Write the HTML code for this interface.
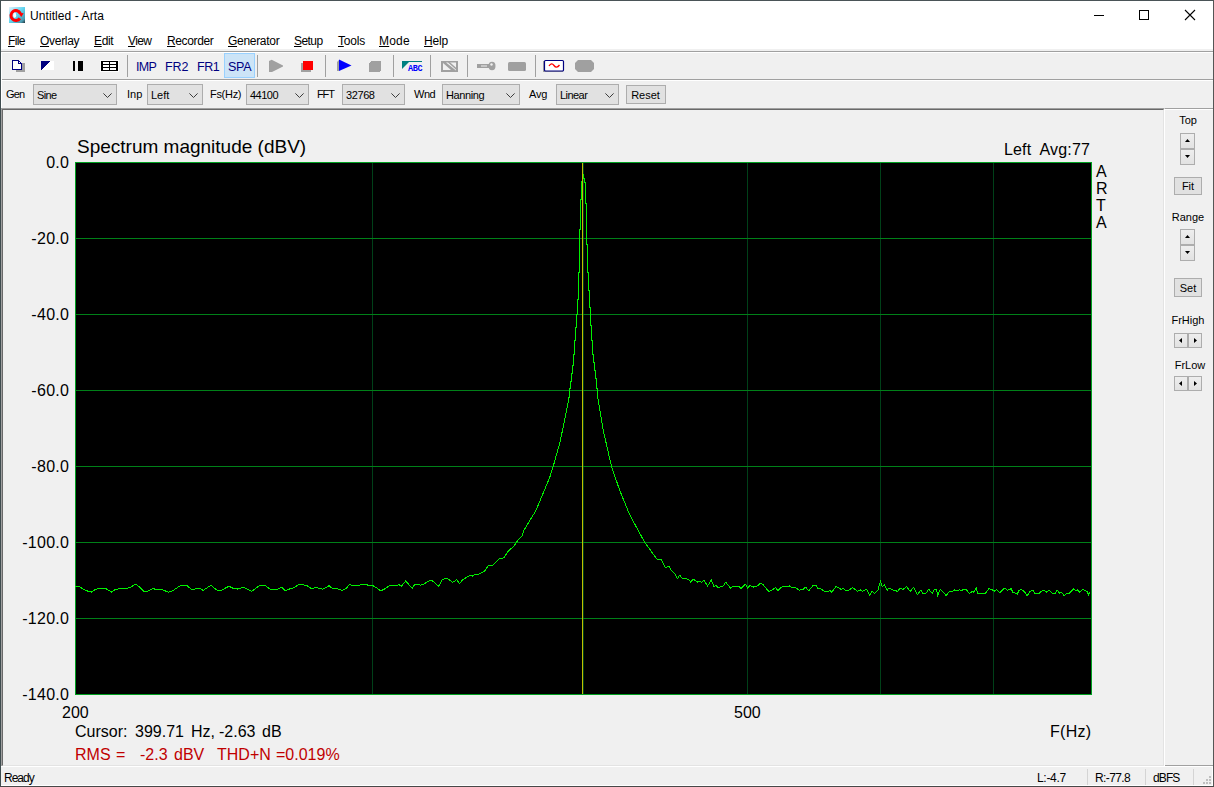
<!DOCTYPE html>
<html><head><meta charset="utf-8"><title>Untitled - Arta</title>
<style>
*{box-sizing:border-box;margin:0;padding:0}
html,body{width:1214px;height:787px;overflow:hidden;background:#f0f0f0;font-family:"Liberation Sans",sans-serif;color:#000}
#win{position:absolute;left:0;top:0;width:1214px;height:787px;background:#f0f0f0;border:1px solid;border-color:#4a5457 #555555 #484848 #3f4c4f;overflow:hidden}
.abs{position:absolute}
.t{position:absolute;white-space:pre;line-height:1}
#title{left:0;top:0;width:1212px;height:30px;background:#fff}
#menu{left:0;top:30px;width:1212px;height:18px;background:#fff}
.ui{font-size:12px}
.m{position:absolute;top:3px;font-size:12px;white-space:pre;line-height:14px}
.m u{text-decoration:underline;text-underline-offset:1px}
.hl{position:absolute;left:0;width:1212px;height:1px}
.sep{position:absolute;top:54px;width:1px;height:22px;background:#a0a0a0}
.lbl{position:absolute;font-size:11px;white-space:pre;line-height:12px;top:87px}
.combo{position:absolute;top:83px;height:21px;background:#e1e1e1;border:1px solid #adadad;font-size:11px;line-height:12px;padding:4px 0 0 3px;white-space:pre}
.combo svg{position:absolute;right:4px;top:8px}
.btn{position:absolute;background:#e1e1e1;border:1px solid #adadad;font-size:11px;line-height:12px;text-align:center;white-space:pre}
.nv{color:#000080}
.tb{position:absolute;top:59px;font-size:12.500px;letter-spacing:-0.1px;line-height:14px;color:#000080;white-space:pre}
.pl{position:absolute;white-space:pre;font-size:16px;line-height:16px}
.w{position:absolute;top:0}
.rp{position:absolute;font-size:11px;line-height:12px;white-space:pre;text-align:center}
.spin{position:absolute;background:linear-gradient(#eeeeee,#e2e2e2);border:1px solid #adadad}
</style></head><body>
<div id="win">
<!-- title bar -->
<div id="title" class="abs">
 <svg class="abs" style="left:8px;top:6px" width="16" height="16" viewBox="0 0 16 16">
  <defs><linearGradient id="ig" x1="0" y1="0" x2="1" y2="1"><stop offset="0" stop-color="#e4f2fb"/><stop offset="0.5" stop-color="#5fd4f0"/><stop offset="0.85" stop-color="#4a9ab0"/><stop offset="1" stop-color="#203038"/></linearGradient></defs>
  <rect width="16" height="16" fill="url(#ig)"/>
  <path d="M11.300 6.400 A4.900 4.900 0 1 0 10.900 11.300" fill="none" stroke="#ff0000" stroke-width="3"/>
  <path d="M9.200 5.800 L14.700 6.300 L12.300 9.900 Z" fill="#ff0000"/>
  <ellipse cx="5.700" cy="8.300" rx="1.500" ry="2.700" fill="#ffffff"/>
 </svg>
 <div class="t ui" style="left:29px;top:9px;letter-spacing:0.08px" id="ttl">Untitled - Arta</div>
 <svg class="abs" style="left:1092px;top:7px" width="110" height="16" viewBox="0 0 110 16" shape-rendering="crispEdges">
  <rect x="1" y="7" width="10" height="1" fill="#000"/>
  <rect x="46.5" y="2.5" width="9" height="9" fill="none" stroke="#000" stroke-width="1"/>
  <g shape-rendering="auto"><path d="M92 2 L102 12 M102 2 L92 12" stroke="#000" stroke-width="1.1" fill="none"/></g>
 </svg>
</div>
<!-- menu -->
<div id="menu" class="abs">
 <div class="m" style="left:7px;letter-spacing:-0.6px"><u>F</u>ile</div>
 <div class="m" style="left:39px;letter-spacing:-0.29px"><u>O</u>verlay</div>
 <div class="m" style="left:93px;letter-spacing:-0.33px"><u>E</u>dit</div>
 <div class="m" style="left:127px;letter-spacing:-0.6px"><u>V</u>iew</div>
 <div class="m" style="left:166px;letter-spacing:-0.37px"><u>R</u>ecorder</div>
 <div class="m" style="left:227px;letter-spacing:-0.3px"><u>G</u>enerator</div>
 <div class="m" style="left:293px;letter-spacing:-0.56px"><u>S</u>etup</div>
 <div class="m" style="left:337px;letter-spacing:-0.22px"><u>T</u>ools</div>
 <div class="m" style="left:378px;letter-spacing:0.2px"><u>M</u>ode</div>
 <div class="m" style="left:423px;letter-spacing:-0.15px"><u>H</u>elp</div>
</div>
<div class="hl" style="top:50px;background:#a0a0a0"></div>
<div class="hl" style="top:51px;background:#fff"></div>
<div class="hl" style="top:78px;background:#a0a0a0"></div>
<div class="hl" style="top:79px;background:#fff"></div>
<div class="abs" style="left:0;top:51px;width:1px;height:56px;background:#fff"></div>

<!-- toolbar icons -->
<svg class="abs" style="left:0;top:52px" width="620" height="26" viewBox="1 53 620 26" shape-rendering="crispEdges">
 <!-- new doc -->
 <rect x="16" y="63" width="9" height="9" fill="#a0a0a0"/>
 <path d="M12.5 60.5 H18.5 L21.5 63.5 V69.5 H12.5 Z" fill="#fff" stroke="#000080" stroke-width="1"/>
 <path d="M18.5 60.5 V63.5 H21.5" fill="none" stroke="#000080" stroke-width="1"/>
 <!-- triangle -->
 <rect x="41" y="61" width="13" height="9" fill="#fff"/>
 <path d="M41 61 H51 L41 70 Z" fill="#000080"/>
 <!-- pause -->
 <rect x="73" y="61" width="2" height="10" fill="#000"/>
 <rect x="78" y="61" width="5" height="10" fill="#000"/>
 <!-- table -->
 <rect x="100" y="60" width="19" height="12" fill="#fff"/><rect x="101" y="61" width="17" height="10" fill="#000"/>
 <g fill="#fff"><rect x="103" y="62" width="6" height="2"/><rect x="110" y="62" width="6" height="2"/>
 <rect x="103" y="65" width="6" height="2"/><rect x="110" y="65" width="6" height="2"/>
 <rect x="103" y="68" width="6" height="2"/><rect x="110" y="68" width="6" height="2"/></g>
 <!-- SPA highlight -->
 <rect x="224.5" y="53.500" width="30" height="24" fill="#cce4f7" stroke="#99d1ff" stroke-width="1"/>
 <!-- grey play -->
 <g shape-rendering="auto"><path d="M269 61 L271.700 59.800 L283 65.500 L283 66.500 L272 72 L269 72 Z" fill="#a0a0a0"/></g>
 <!-- red stop -->
 <path d="M301 63 H303 V70 H311 V72 H301 Z" fill="#a0a0a0"/>
 <rect x="303" y="61" width="10" height="9" fill="#ff0000"/>
 <!-- blue play -->
 <g shape-rendering="auto"><path d="M337 62 L339 60 L339 71 L337 71 Z" fill="#a0a0a0"/><path d="M339 59.500 L351.500 65.500 L339 71 Z" fill="#0000ff"/></g>
 <!-- grey stop -->
 <path d="M371 61 H381 V70 L379 72 H369 V63 Z" fill="#a0a0a0"/>
 <!-- ABC -->
 <rect x="402" y="61" width="20" height="1" fill="#008080"/>
 <g shape-rendering="auto"><path d="M402 61 H410 L402 69 Z" fill="#008080"/></g>
 <!-- hatched -->
 <g shape-rendering="auto"><rect x="441" y="61" width="17" height="11" fill="#a0a0a0"/>
 <path d="M443 63 V70 H451 Z M446 62.500 H456 V70.500 Z" fill="#f0f0f0"/><path d="M448.500 62 L457 69.500" stroke="#a0a0a0" stroke-width="1.6"/></g>
 <!-- key -->
 <g shape-rendering="auto"><rect x="477" y="64" width="12" height="4" fill="#a0a0a0"/><rect x="481" y="65.500" width="6" height="1" fill="#f0f0f0"/>
 <ellipse cx="492" cy="66" rx="3.5" ry="4.200" fill="#a0a0a0"/><circle cx="491.500" cy="64.500" r="1.200" fill="#f0f0f0"/></g>
 <!-- grey rect -->
 <g shape-rendering="auto"><rect x="508" y="62" width="18" height="9" rx="1.500" fill="#a0a0a0"/></g>
 <!-- scope -->
 <rect x="543" y="61" width="20" height="11" fill="#a0a0a0"/>
 <g shape-rendering="auto"><rect x="544.500" y="60.500" width="19" height="10.500" rx="1" fill="#fff" stroke="#000080" stroke-width="1.200"/>
 <path d="M549 66 Q551.500 62 554 65.500 T559.500 65" fill="none" stroke="#ff0000" stroke-width="1.300"/></g>
 <!-- octagon -->
 <g shape-rendering="auto"><path d="M578 60 H591 L594 63 V69 L591 72 H578 L575 69 V63 Z" fill="#a0a0a0"/></g>
</svg>
<div class="sep" style="left:126px"></div>
<div class="sep" style="left:256px"></div>
<div class="sep" style="left:324px"></div>
<div class="sep" style="left:392px"></div>
<div class="sep" style="left:429px"></div>
<div class="sep" style="left:466px"></div>
<div class="sep" style="left:534px"></div>
<div class="tb" style="left:135px;letter-spacing:-0.7px" id="imp">IMP</div>
<div class="tb" style="left:164px" id="fr2">FR2</div>
<div class="tb" style="left:196px;letter-spacing:-0.4px" id="fr1">FR1</div>
<div class="tb" style="left:227px;letter-spacing:-0.25px" id="spa">SPA</div>
<div class="t" style="left:407px;top:64px;font-size:8.500px;font-weight:bold;color:#0000ff;font-family:'Liberation Mono',monospace;letter-spacing:-0.3px" id="abc">ABC</div>

<!-- dialog bar -->
<div class="lbl" style="left:5px;letter-spacing:-0.85px">Gen</div>
<div class="combo" style="left:32px;width:84px;letter-spacing:-0.6px">Sine<svg width="9" height="6" viewBox="0 0 9 6"><path d="M0.400 0.400 L4.500 4.500 L8.600 0.400" fill="none" stroke="#3c3c3c" stroke-width="1"/></svg></div>
<div class="lbl" style="left:126px">Inp</div>
<div class="combo" style="left:146px;width:56px">Left<svg width="9" height="6" viewBox="0 0 9 6"><path d="M0.400 0.400 L4.500 4.500 L8.600 0.400" fill="none" stroke="#3c3c3c" stroke-width="1"/></svg></div>
<div class="lbl" style="left:209px;letter-spacing:-0.3px">Fs(Hz)</div>
<div class="combo" style="left:245px;width:63px;letter-spacing:-0.5px">44100<svg width="9" height="6" viewBox="0 0 9 6"><path d="M0.400 0.400 L4.500 4.500 L8.600 0.400" fill="none" stroke="#3c3c3c" stroke-width="1"/></svg></div>
<div class="lbl" style="left:316px;letter-spacing:-1.1px">FFT</div>
<div class="combo" style="left:341px;width:63px;letter-spacing:-0.4px">32768<svg width="9" height="6" viewBox="0 0 9 6"><path d="M0.400 0.400 L4.500 4.500 L8.600 0.400" fill="none" stroke="#3c3c3c" stroke-width="1"/></svg></div>
<div class="lbl" style="left:413px;letter-spacing:-0.5px">Wnd</div>
<div class="combo" style="left:441px;width:78px;letter-spacing:-0.4px">Hanning<svg width="9" height="6" viewBox="0 0 9 6"><path d="M0.400 0.400 L4.500 4.500 L8.600 0.400" fill="none" stroke="#3c3c3c" stroke-width="1"/></svg></div>
<div class="lbl" style="left:528px;letter-spacing:-0.15px">Avg</div>
<div class="combo" style="left:555px;width:63px;letter-spacing:-0.55px">Linear<svg width="9" height="6" viewBox="0 0 9 6"><path d="M0.400 0.400 L4.500 4.500 L8.600 0.400" fill="none" stroke="#3c3c3c" stroke-width="1"/></svg></div>
<div class="btn" style="left:625px;top:84px;width:40px;height:19px;padding-top:3px;text-indent:-1px">Reset</div>

<!-- view client edge -->
<div class="abs" style="left:0;top:107px;width:1164px;height:659px;border-top:1px solid #a0a0a0;border-left:1px solid #a0a0a0;border-right:1px solid #fff;border-bottom:1px solid #fff"></div>
<div class="abs" style="left:1px;top:108px;width:1162px;height:657px;border-top:1px solid #696969;border-left:1px solid #696969;border-right:1px solid #e3e3e3;border-bottom:1px solid #e3e3e3"></div>

<!-- right panel -->
<div class="abs" style="left:1164px;top:107px;width:48px;height:1px;background:#a0a0a0"></div>
<div class="abs" style="left:1163px;top:108px;width:49px;height:1px;background:#fff"></div>
<div class="abs" style="left:1163px;top:108px;width:1px;height:656px;background:#fff"></div>
<div class="abs" style="left:1164px;top:764px;width:48px;height:1px;background:#a0a0a0"></div>
<div class="rp" style="left:1167px;width:40px;top:113px">Top</div>
<div class="spin" style="left:1179px;top:132px;width:15px;height:16px"><svg class="abs" style="left:4px;top:5px" width="5" height="3"><path d="M0 3 L2.500 0 L5 3 Z" fill="#000"/></svg></div>
<div class="spin" style="left:1179px;top:148px;width:15px;height:16px"><svg class="abs" style="left:4px;top:5px" width="5" height="3"><path d="M0 0 L2.500 3 L5 0 Z" fill="#000"/></svg></div>
<div class="btn" style="left:1173px;top:176px;width:28px;height:18px;padding-top:2px">Fit</div>
<div class="rp" style="left:1167px;width:40px;top:210px">Range</div>
<div class="spin" style="left:1179px;top:228px;width:15px;height:16px"><svg class="abs" style="left:4px;top:5px" width="5" height="3"><path d="M0 3 L2.500 0 L5 3 Z" fill="#000"/></svg></div>
<div class="spin" style="left:1179px;top:244px;width:15px;height:16px"><svg class="abs" style="left:4px;top:5px" width="5" height="3"><path d="M0 0 L2.500 3 L5 0 Z" fill="#000"/></svg></div>
<div class="btn" style="left:1173px;top:277px;width:28px;height:19px;padding-top:3px">Set</div>
<div class="rp" style="left:1167px;width:40px;top:313px">FrHigh</div>
<div class="spin" style="left:1173px;top:332px;width:14px;height:15px"><svg class="abs" style="left:4px;top:4px" width="3" height="5"><path d="M3 0 L0 2.500 L3 5 Z" fill="#000"/></svg></div>
<div class="spin" style="left:1187px;top:332px;width:14px;height:15px"><svg class="abs" style="left:5px;top:4px" width="3" height="5"><path d="M0 0 L3 2.500 L0 5 Z" fill="#000"/></svg></div>
<div class="rp" style="left:1169px;width:40px;top:358px">FrLow</div>
<div class="spin" style="left:1173px;top:375px;width:14px;height:15px"><svg class="abs" style="left:4px;top:4px" width="3" height="5"><path d="M3 0 L0 2.500 L3 5 Z" fill="#000"/></svg></div>
<div class="spin" style="left:1187px;top:375px;width:14px;height:15px"><svg class="abs" style="left:5px;top:4px" width="3" height="5"><path d="M0 0 L3 2.500 L0 5 Z" fill="#000"/></svg></div>

<!-- plot -->
<svg class="abs" style="left:0;top:0" width="1212" height="785" viewBox="1 1 1212 785" shape-rendering="crispEdges">
 <rect x="75" y="162" width="1017" height="533" fill="#000"/>
 <g fill="#004018">
  <rect x="372" y="163" width="1" height="531"/><rect x="583" y="163" width="1" height="531"/><rect x="747" y="163" width="1" height="531"/><rect x="880" y="163" width="1" height="531"/><rect x="993" y="163" width="1" height="531"/>
 </g>
 <g fill="#008018">
  <rect x="76" y="238" width="1015" height="1"/><rect x="76" y="314" width="1015" height="1"/><rect x="76" y="390" width="1015" height="1"/><rect x="76" y="466" width="1015" height="1"/><rect x="76" y="542" width="1015" height="1"/><rect x="76" y="618" width="1015" height="1"/>
 </g>
 <rect x="75.500" y="162.500" width="1016" height="532" fill="none" stroke="#00a020" stroke-width="1"/>
 <polyline fill="none" stroke="#00f000" stroke-width="1" points="75.4,586.3 78.6,586.3 86.1,590.6 91.4,592.1 95.7,589.3 102.1,588.1 106.4,588.9 111.8,592.1 115.4,589.3 123.5,588.5 129.5,587.8 135.3,584.2 138.5,586.1 143.9,591.5 148.2,591.1 153.1,588.3 156.7,590.0 161.7,589.3 168.5,592.3 172.8,590.6 180.3,585.7 186.7,585.5 191.6,589.3 196.4,588.9 199.6,588.1 203.2,590.4 210.9,585.3 216.7,590.0 221.0,590.4 228.9,586.3 233.2,588.3 238.1,589.1 243.5,587.2 251.6,591.3 259.5,585.7 265.3,585.7 270.2,589.1 277.7,589.1 282.0,587.2 285.2,591.1 288.5,589.3 293.8,587.8 299.2,584.4 306.7,585.3 311.6,588.9 315.2,587.4 322.7,589.1 329.1,585.7 332.4,588.4 337.1,588.6 342.1,590.5 346.1,588.6 349.6,584.3 352.1,585.4 359.6,585.2 362.8,584.1 366.0,584.3 369.7,586.0 372.5,585.4 376.1,587.5 380.0,590.3 383.4,589.9 389.6,585.4 393.9,585.4 396.0,586.0 398.8,584.5 401.4,586.3 405.7,580.9 412.1,588.4 414.7,584.5 418.1,584.3 420.7,585.2 423.9,584.1 430.3,580.0 433.5,581.5 438.9,586.5 442.1,580.0 445.3,578.3 448.1,579.0 452.8,582.4 456.6,579.6 459.6,583.5 462.4,580.0 469.9,575.3 472.5,576.0 475.3,574.3 477.4,574.7 484.5,571.3 488.1,565.7 493.0,565.3 499.5,558.8 503.8,557.8 508.5,550.7 513.8,546.4 518.1,540.0 522.3,535.6 523.5,531.0 536.0,510.4 549.8,477.2 553.2,466.5 560.1,441.8 565.8,414.3 569.5,395.0 569.5,388.8 570.5,388.8 570.5,381.3 571.5,381.3 571.5,373.1 572.5,373.1 572.5,365.7 573.5,365.7 573.5,354.9 574.5,354.9 574.5,340.9 575.5,340.9 575.5,327.7 576.5,327.7 576.5,314.5 577.5,314.5 577.5,299.7 578.5,299.7 578.5,272.0 579.5,272.0 579.5,229.8 580.5,229.8 580.5,199.3 581.5,199.3 581.5,181.0 582.5,181.0 582.5,176.0 583.5,176.0 583.5,174.0 583.5,174.0 583.5,178.0 584.5,178.0 584.5,182.5 585.5,182.5 585.5,203.9 586.5,203.9 586.5,244.3 587.5,244.3 587.5,272.4 588.5,272.4 588.5,290.6 589.5,290.6 589.5,307.9 590.5,307.9 590.5,325.2 591.5,325.2 591.5,340.9 592.5,340.9 592.5,354.1 593.5,354.1 593.5,362.4 594.5,362.4 594.5,370.6 595.5,370.6 595.5,378.9 596.5,378.9 596.5,388.8 597.5,388.8 597.5,396.0 603.5,431.5 611.5,466.5 619.5,489.8 629.8,515.0 644.7,542.4 657.3,559.6 661.1,559.3 665.3,567.4 669.2,566.3 671.8,571.1 675.0,574.3 677.5,578.6 679.7,575.3 682.5,578.6 685.7,578.6 688.9,579.6 690.6,582.2 693.2,579.2 697.5,582.0 699.6,581.3 701.7,582.2 703.9,580.0 707.5,586.0 711.4,580.0 714.0,587.1 715.7,585.4 718.2,587.5 723.2,586.0 725.7,582.2 730.7,588.2 732.8,586.0 734.9,587.1 738.2,586.0 740.9,588.4 745.7,584.1 747.4,588.2 749.9,585.4 753.1,587.1 757.4,586.0 760.2,583.5 762.8,584.3 768.8,591.6 773.1,589.3 775.6,587.5 777.8,590.5 782.5,586.3 789.6,586.0 791.7,587.5 794.9,587.1 799.2,590.3 803.0,589.3 805.6,587.1 808.8,590.8 813.1,585.4 815.9,585.4 818.0,588.4 820.6,588.8 823.8,591.0 828.1,591.4 830.2,590.5 831.7,592.5 836.0,586.5 841.0,589.3 843.1,588.4 845.9,591.0 848.5,590.5 852.7,587.5 857.4,591.4 860.2,589.7 862.4,591.4 866.7,589.3 869.9,595.3 872.0,591.4 874.6,593.5 878.4,589.3 878.5,588.4 880.4,581.2 882.3,586.5 884.2,584.6 887.1,590.3 888.9,588.0 892.7,589.9 897.5,591.3 900.3,588.0 903.2,589.4 906.4,586.5 910.2,591.3 913.6,587.5 917.4,594.5 920.8,590.3 922.7,593.2 925.9,593.2 928.7,589.4 932.5,593.2 934.4,589.4 936.3,589.4 937.8,595.6 940.1,589.4 942.9,591.8 946.2,595.6 949.6,591.3 951.5,591.8 954.3,589.9 956.2,590.9 959.0,589.9 961.9,590.3 963.8,589.4 966.6,589.9 969.5,593.7 972.3,591.3 973.8,592.2 976.1,587.5 977.6,593.2 981.8,593.2 985.6,593.2 989.0,588.4 992.2,589.9 994.1,591.3 996.6,589.4 999.8,592.6 1003.6,588.8 1005.5,588.4 1007.4,590.3 1011.1,588.8 1013.0,592.6 1015.9,593.2 1017.4,594.1 1018.7,590.7 1021.6,589.4 1024.4,591.8 1027.2,595.6 1030.1,591.3 1032.9,590.3 1034.8,593.2 1038.6,593.7 1041.5,591.3 1044.3,590.3 1046.2,592.2 1049.0,590.3 1052.8,593.7 1055.3,593.2 1057.2,590.3 1059.5,593.2 1061.4,592.2 1064.2,595.6 1067.0,593.2 1068.9,593.7 1073.7,588.8 1075.6,590.3 1077.5,589.9 1079.3,592.2 1083.1,589.4 1086.9,591.3 1088.8,595.0 1089.8,592.2"/>
 <rect x="582" y="163" width="1" height="531" fill="#c0c000"/>
</svg>
<div class="pl" style="left:76px;top:136px;font-size:19px;line-height:19px" id="ptitle">Spectrum magnitude (dBV)</div>
<div class="pl" style="right:123px;top:141px;letter-spacing:0.15px" id="pleft">Left  Avg:77</div>
<div class="pl" style="left:1095px;top:162px;line-height:17px" id="parta">A
R
T
A</div>
<div class="pl" style="right:1143.7px;top:154px;letter-spacing:0.3px">0.0</div>
<div class="pl" style="right:1143.7px;top:230px;letter-spacing:0.3px">-20.0</div>
<div class="pl" style="right:1143.7px;top:306px;letter-spacing:0.3px">-40.0</div>
<div class="pl" style="right:1143.7px;top:382px;letter-spacing:0.3px">-60.0</div>
<div class="pl" style="right:1143.7px;top:458px;letter-spacing:0.3px">-80.0</div>
<div class="pl" style="right:1143.7px;top:534px;letter-spacing:0.3px">-100.0</div>
<div class="pl" style="right:1143.7px;top:610px;letter-spacing:0.3px">-120.0</div>
<div class="pl" style="right:1143.7px;top:686px;letter-spacing:0.3px">-140.0</div>

<div class="pl" style="left:61px;top:704px" id="p200">200</div>
<div class="pl" style="left:733px;top:704px" id="p500">500</div>
<div class="pl" style="right:121.700px;top:723px;letter-spacing:0.25px" id="pfhz">F(Hz)</div>
<div class="pl" style="left:0;top:723px" id="pcur"><span class="w" style="left:74px">Cursor:</span> <span class="w" style="left:134px">399.71</span> <span class="w" style="left:190px">Hz,</span> <span class="w" style="left:218px">-2.63</span> <span class="w" style="left:261px">dB</span></div>
<div class="pl" style="left:0;top:746px;color:#c00000" id="prms"><span class="w" style="left:74px">RMS</span> <span class="w" style="left:115px">=</span>   <span class="w" style="left:139px">-2.3</span> <span class="w" style="left:173px">dBV</span>  <span class="w" style="left:216px">THD+N</span> <span class="w" style="left:275px">=0.019%</span></div>

<!-- status bar -->
<div class="abs" style="left:0;top:765px;width:1212px;height:1px;background:#fff"></div>
<div class="abs" style="left:0;top:784px;width:1212px;height:1px;background:#fff"></div><div class="abs" style="left:1211px;top:766px;width:1px;height:19px;background:#fff"></div>
<div class="t ui" style="left:3px;top:771px;letter-spacing:-1px" id="ready">Ready</div>
<div class="t ui" style="left:1036px;top:771px;letter-spacing:-0.3px" id="sl">L:-4.7</div>
<div class="t ui" style="left:1094px;top:771px;letter-spacing:-0.6px" id="sr">R:-77.8</div>
<div class="t ui" style="left:1152px;top:771px;letter-spacing:-0.9px" id="sd">dBFS</div>
<div class="abs" style="left:1086px;top:768px;width:1px;height:16px;background:#d4d4d4"></div>
<div class="abs" style="left:1144px;top:768px;width:1px;height:16px;background:#d4d4d4"></div>
<div class="abs" style="left:1192px;top:768px;width:1px;height:16px;background:#d4d4d4"></div>
<svg class="abs" style="left:1199px;top:772px" width="12" height="12" shape-rendering="crispEdges"><g fill="#bfbfbf"><rect x="9" y="3" width="2" height="2"/><rect x="6" y="6" width="2" height="2"/><rect x="9" y="6" width="2" height="2"/><rect x="3" y="9" width="2" height="2"/><rect x="6" y="9" width="2" height="2"/><rect x="9" y="9" width="2" height="2"/></g></svg>
</div>
</body></html>
